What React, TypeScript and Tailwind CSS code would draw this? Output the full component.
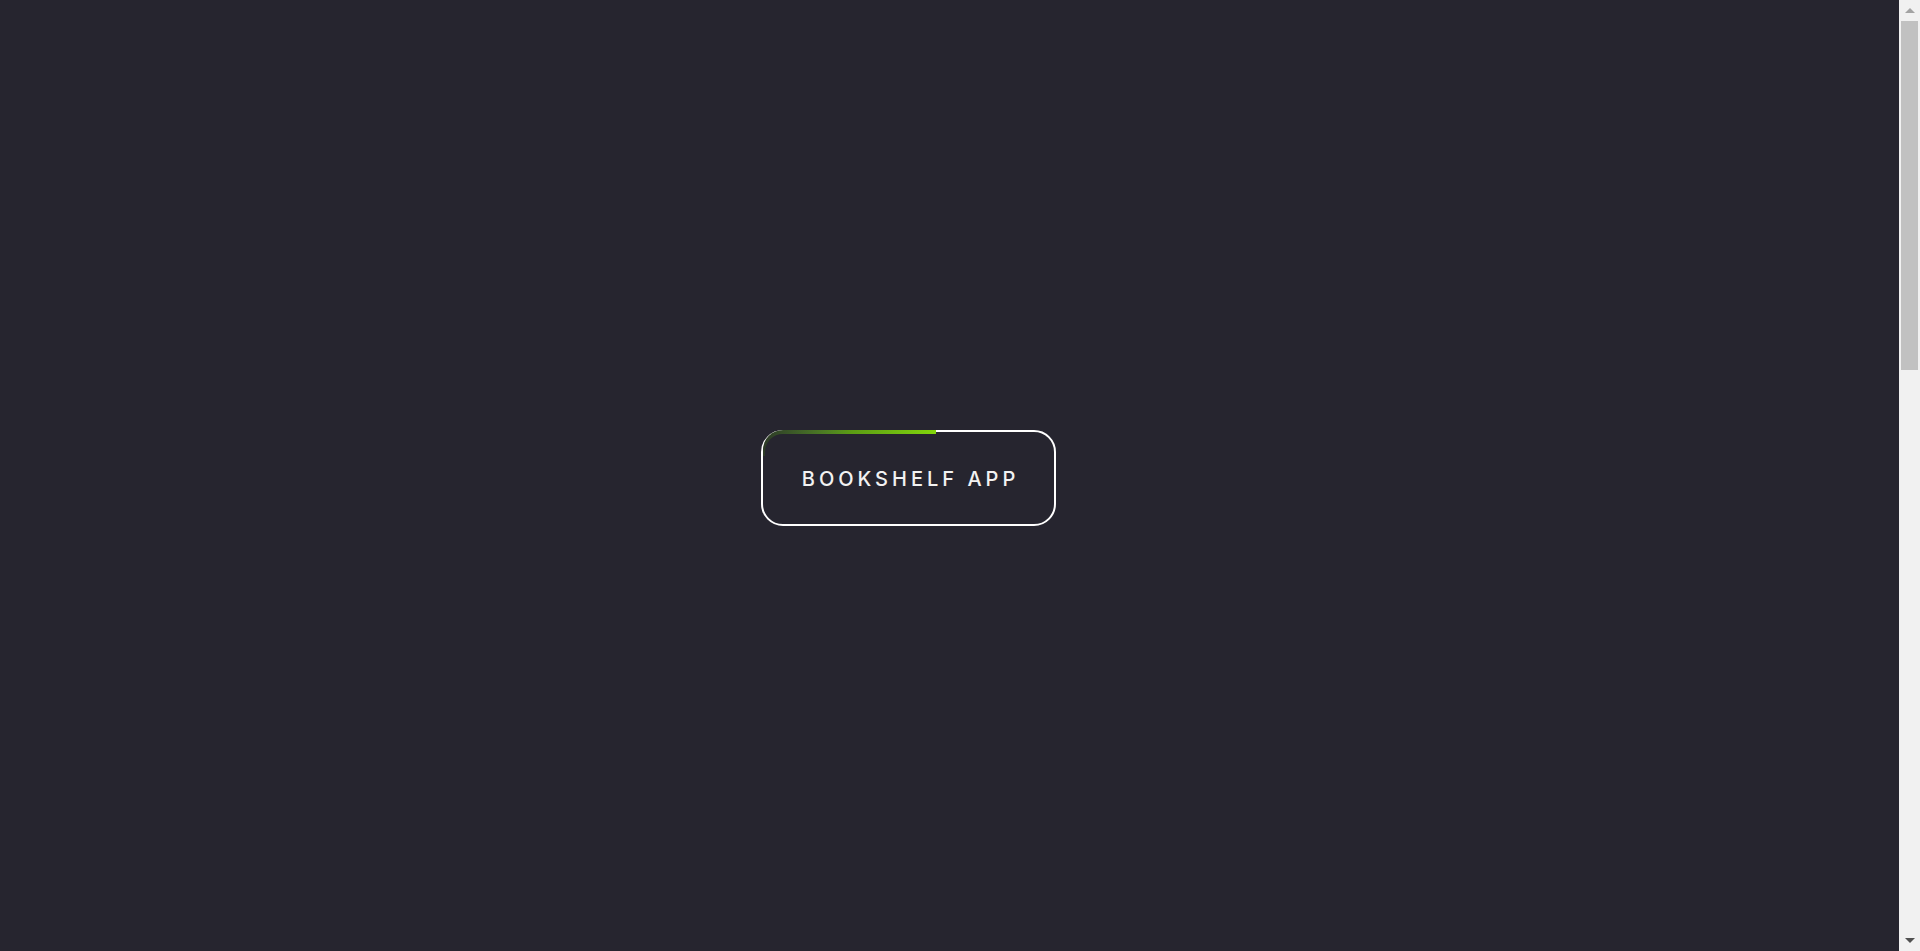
const Scrollbar = () => (
  <div className="fixed top-0 right-0 h-full w-[21px] bg-[#f1f1f1] flex flex-col items-center">
    <div className="h-[21px] w-full flex items-center justify-center">
      <div className="w-0 h-0 border-l-[5px] border-r-[5px] border-b-[5px] border-l-transparent border-r-transparent border-b-[#a3a3a3]" />
    </div>
    <div className="w-[17px] h-[349px] bg-[#c1c1c1]" />
    <div className="flex-1" />
    <div className="h-[21px] w-full flex items-center justify-center">
      <div className="w-0 h-0 border-l-[5px] border-r-[5px] border-t-[5px] border-l-transparent border-r-transparent border-t-[#505050]" />
    </div>
  </div>
);

const App = () => {
  return (
    <div className="bg-[#26252f] min-h-screen font-['Inter',sans-serif]">
      <section className="h-[951px] flex items-center justify-center pr-[103px] pt-[5px]">
        <div className="relative w-[295px] h-[96px] rounded-[22px] border-2 border-white flex items-center justify-center">
          {/* loading stroke over the top edge */}
          <div className="absolute -top-[2px] left-0 w-[173px] h-[26px] rounded-tl-[20px] overflow-hidden bg-gradient-to-r from-[#2c3a26] via-[#5a9a14] to-[#82d60a]">
            <div className="absolute top-[4px] left-[2px] right-0 bottom-0 rounded-tl-[18px] bg-[#26252f]" />
          </div>
          <h1 className="text-[20px] font-medium tracking-[4px] text-[#f2f2f2] leading-none pl-[4px] pt-[2px]">
            BOOKSHELF APP
          </h1>
        </div>
      </section>
      <div className="h-[1549px]" />
      <Scrollbar />
    </div>
  );
};

export default App;
